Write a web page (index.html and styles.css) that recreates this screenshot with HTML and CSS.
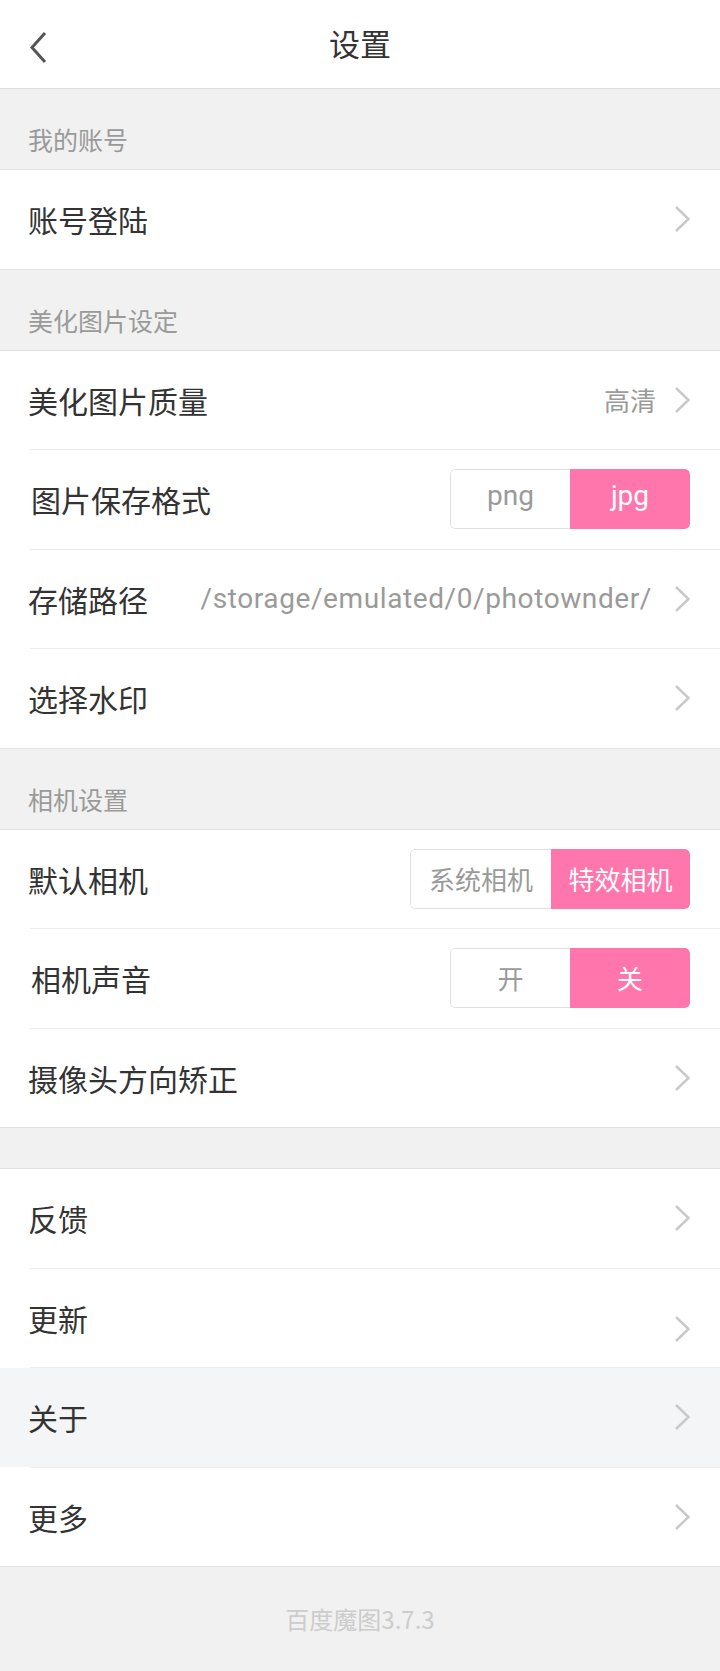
FILE: index.html
```html
<!DOCTYPE html>
<html lang="zh-CN">
<head>
<meta charset="utf-8">
<title>设置</title>
<link rel="stylesheet" href="styles.css">
</head>
<body>
<div class="page">
  <header class="topbar">
    <div class="back">
      <svg width="20" height="44" viewBox="0 0 20 44"><polyline points="16,11 3,25.5 16,40" fill="none" stroke="#555" stroke-width="3"/></svg>
    </div>
    <div class="title">设置</div>
    <div></div>
  </header>

  <div class="sec">我的账号</div>
  <div class="list">
    <div class="row">
      <span class="label">账号登陆</span>
      <span class="chev"><svg width="16" height="28" viewBox="0 0 16 28"><polyline points="2,2 14.5,14 2,26" fill="none" stroke="#c9c9c9" stroke-width="2.5"/></svg></span>
    </div>
  </div>

  <div class="sec">美化图片设定</div>
  <div class="list">
    <div class="row">
      <span class="label">美化图片质量</span>
      <span class="value">高清</span>
      <span class="chev"><svg width="16" height="28" viewBox="0 0 16 28"><polyline points="2,2 14.5,14 2,26" fill="none" stroke="#c9c9c9" stroke-width="2.5"/></svg></span>
    </div>
    <div class="sep"></div>
    <div class="row">
      <span class="label label-seg">图片保存格式</span>
      <div class="seg">
        <span class="seg-item seg-off seg-w120 latin">png</span>
        <span class="seg-item seg-on seg-w120 latin">jpg</span>
      </div>
    </div>
    <div class="sep"></div>
    <div class="row">
      <span class="label">存储路径</span>
      <span class="value path latin">/storage/emulated/0/photownder/</span>
      <span class="chev"><svg width="16" height="28" viewBox="0 0 16 28"><polyline points="2,2 14.5,14 2,26" fill="none" stroke="#c9c9c9" stroke-width="2.5"/></svg></span>
    </div>
    <div class="sep"></div>
    <div class="row">
      <span class="label">选择水印</span>
      <span class="chev"><svg width="16" height="28" viewBox="0 0 16 28"><polyline points="2,2 14.5,14 2,26" fill="none" stroke="#c9c9c9" stroke-width="2.5"/></svg></span>
    </div>
  </div>

  <div class="sec">相机设置</div>
  <div class="list">
    <div class="row">
      <span class="label">默认相机</span>
      <div class="seg">
        <span class="seg-item seg-off seg-w141">系统相机</span>
        <span class="seg-item seg-on seg-w139">特效相机</span>
      </div>
    </div>
    <div class="sep"></div>
    <div class="row">
      <span class="label label-seg">相机声音</span>
      <div class="seg">
        <span class="seg-item seg-off seg-w120">开</span>
        <span class="seg-item seg-on seg-w120">关</span>
      </div>
    </div>
    <div class="sep"></div>
    <div class="row">
      <span class="label">摄像头方向矫正</span>
      <span class="chev"><svg width="16" height="28" viewBox="0 0 16 28"><polyline points="2,2 14.5,14 2,26" fill="none" stroke="#c9c9c9" stroke-width="2.5"/></svg></span>
    </div>
  </div>

  <div class="gap"></div>
  <div class="list">
    <div class="row">
      <span class="label">反馈</span>
      <span class="chev"><svg width="16" height="28" viewBox="0 0 16 28"><polyline points="2,2 14.5,14 2,26" fill="none" stroke="#c9c9c9" stroke-width="2.5"/></svg></span>
    </div>
    <div class="sep"></div>
    <div class="row">
      <span class="label">更新</span>
      <span class="chev chev-low"><svg width="16" height="28" viewBox="0 0 16 28"><polyline points="2,2 14.5,14 2,26" fill="none" stroke="#c9c9c9" stroke-width="2.5"/></svg></span>
    </div>
    <div class="sep"></div>
    <div class="row row-pressed">
      <span class="label">关于</span>
      <span class="chev"><svg width="16" height="28" viewBox="0 0 16 28"><polyline points="2,2 14.5,14 2,26" fill="none" stroke="#c9c9c9" stroke-width="2.5"/></svg></span>
    </div>
    <div class="sep"></div>
    <div class="row">
      <span class="label">更多</span>
      <span class="chev"><svg width="16" height="28" viewBox="0 0 16 28"><polyline points="2,2 14.5,14 2,26" fill="none" stroke="#c9c9c9" stroke-width="2.5"/></svg></span>
    </div>
  </div>

  <footer class="footer">百度魔图3.7.3</footer>
</div>
</body>
</html>
```

FILE: styles.css
```css
* { box-sizing: border-box; }

html, body {
  margin: 0;
  padding: 0;
  background: #f1f1f1;
}

body {
  font-family: "Noto Sans CJK SC", "Noto Sans", sans-serif;
  color: #333;
}

.page {
  width: 720px;
  min-height: 1671px;
  display: flex;
  flex-direction: column;
  background: #f1f1f1;
}

.topbar {
  height: 89px;
  background: #fff;
  border-bottom: 1px solid #dedede;
  display: grid;
  grid-template-columns: 1fr auto 1fr;
  align-items: center;
}

.back {
  padding-left: 29px;
  display: flex;
  align-items: center;
}

.back svg { display: block; }

.title {
  font-size: 31px;
  line-height: 1;
  color: #333;
  padding-bottom: 3px;
}

.sec {
  height: 81px;
  border-bottom: 1px solid #e2e2e2;
  display: flex;
  align-items: flex-end;
  padding: 0 28px 17px;
  font-size: 25px;
  line-height: 26px;
  color: #9a9a9a;
}

.list {
  background: #fff;
  border-bottom: 1px solid #e2e2e2;
}

.row {
  height: 98.5px;
  display: flex;
  align-items: center;
  padding: 0 30px 0 28px;
  background: #fff;
}

.row-pressed {
  background: #f4f5f7;
}

.sep {
  height: 1px;
  background: #ececec;
  border-left: 30px solid #fff;
}

.label {
  font-size: 30px;
  line-height: 1;
  color: #333;
  flex: 0 0 auto;
}

.label-seg {
  padding-left: 3px;
}

.value {
  margin-left: auto;
  font-size: 26px;
  line-height: 1;
  color: #9a9a9a;
  padding-right: 18px;
}

.path {
  font-size: 28px;
  letter-spacing: 0.6px;
  padding-right: 22px;
}

.latin {
  font-family: "Roboto", "Noto Sans", sans-serif;
}

.chev {
  margin-left: auto;
  display: flex;
}

.value + .chev {
  margin-left: 0;
}

.chev svg { display: block; }

.chev-low {
  margin-top: 22px;
}

.seg {
  margin-left: auto;
  display: flex;
  height: 60px;
  border-radius: 5px;
  overflow: hidden;
}

.seg-item {
  height: 60px;
  display: flex;
  align-items: center;
  justify-content: center;
  font-size: 26px;
  line-height: 1;
}

.seg-item.latin {
  font-size: 28px;
  padding-bottom: 7px;
}

.seg-off {
  color: #9a9a9a;
  background: #fff;
  border: 1px solid #e0e0e0;
  border-right: none;
  border-radius: 5px 0 0 5px;
}

.seg-on {
  color: #fff;
  background: #ff76ad;
  border-radius: 0 5px 5px 0;
}

.seg-w120 { width: 120px; }
.seg-w141 { width: 141px; }
.seg-w139 { width: 139px; }

.gap {
  height: 41px;
  border-bottom: 1px solid #e2e2e2;
}

.footer {
  flex: 1 0 auto;
  display: flex;
  align-items: center;
  justify-content: center;
  font-size: 24px;
  color: #cccccc;
  padding-bottom: 2px;
}
```
